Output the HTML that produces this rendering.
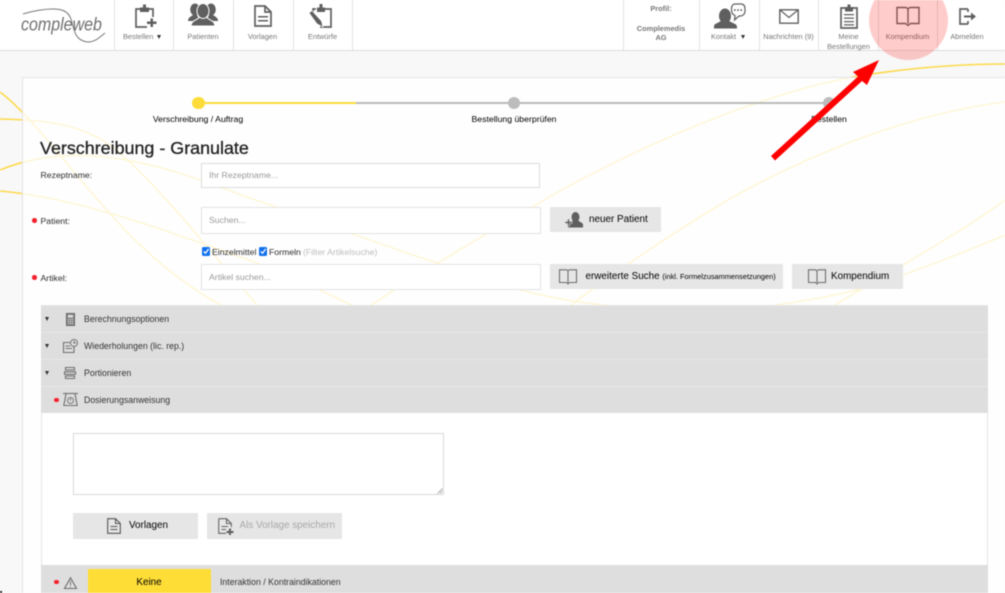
<!DOCTYPE html>
<html lang="de">
<head>
<meta charset="utf-8">
<title>Verschreibung - Granulate</title>
<style>
html,body{margin:0;padding:0;width:1005px;height:593px;overflow:hidden;background:#f8f8f8}
#r{position:relative;width:1005px;height:593px;overflow:hidden;font-family:"Liberation Sans",Arial,sans-serif;background:#f8f8f8;filter:blur(.4px)}
#r *{box-sizing:border-box}
.a{position:absolute}
.t{position:absolute;white-space:nowrap;line-height:12px;height:12px}
.c{transform:translateX(-50%)}
.n{font-size:7.4px;color:#777}
.l{font-size:8.7px;color:#2c2c2c}
.p{font-size:8.7px;color:#999}
.s{font-size:8.7px;color:#000}
.b{font-size:9.9px;color:#000}
.r{font-size:8.75px;color:#333}
.sep{position:absolute;top:0;width:1px;height:50px;background:#e2e2e2}
.inp{position:absolute;background:#fff;border:1px solid #dcdcdc}
.inp2{border:1.5px solid #e3e3e3}
.btn{position:absolute;background:#e6e6e6;border-radius:1px}
.row{position:absolute;left:41px;width:947px;height:27px;background:#dedede;border-top:1px solid #e6e6e6}
.star{position:absolute;width:4.5px;height:4.5px;border-radius:50%;background:#f5222d}
.tri{position:absolute;width:0;height:0;border-left:2.5px solid transparent;border-right:2.5px solid transparent;border-top:4.5px solid #333}
svg{position:absolute;overflow:visible}
.g{fill:#5f5f5f}
.o{fill:none;stroke:#5f5f5f;stroke-width:1.7}
.o2{fill:none;stroke:#6f6f6f;stroke-width:1.1}
</style>
</head>
<body>
<div id="r">
  <!-- background curves -->
  <svg style="left:0;top:0" width="1005" height="593" viewBox="0 0 1005 593" fill="none" stroke="#fdd94a" stroke-width="1.6">
    <path d="M0 92C30 114 70 170 113 217C150 258 185 285 222 306"/>
    <path d="M0 119C40 120 85 122 120 153C170 198 215 258 258 306"/>
    <path d="M0 170C60 145 130 155 200 180C300 216 430 262 520 290C560 300 585 303 612 306"/>
    <path d="M0 191C80 198 170 232 257 263C295 277 325 293 354 306"/>
    <path d="M370 306C420 272 490 232 532 207C620 155 760 90 872 74C920 67 960 64 1005 64"/>
    <path d="M570 306C610 275 680 228 733 197C800 160 900 115 1005 102"/>
    <path d="M833 306C860 290 880 278 903 265C940 243 975 222 1005 200"/>
    <path d="M770 306C810 300 840 295 867 287C920 270 965 252 1005 235"/>
  </svg>

  <!-- card -->
  <div class="a" style="left:22px;top:77px;width:1000px;height:530px;background:rgba(255,255,255,.79);border:1px solid #e3e3e3"></div>

  <!-- header -->
  <div class="a" style="left:0;top:0;width:1005px;height:51px;background:#fff;border-bottom:1px solid #dedede"></div>
  <div class="sep" style="left:114px"></div><div class="sep" style="left:173px"></div><div class="sep" style="left:233px"></div><div class="sep" style="left:293px"></div><div class="sep" style="left:352px"></div>
  <div class="sep" style="left:623px"></div><div class="sep" style="left:699px"></div><div class="sep" style="left:759px"></div><div class="sep" style="left:818px"></div><div class="sep" style="left:878px"></div><div class="sep" style="left:937px"></div>

  <!-- logo -->
  <div class="t" style="left:21px;top:16px;height:20px;line-height:20px;font-size:16px;font-style:italic;color:#707070;transform:scaleY(1.15)">compleweb</div>
  <svg style="left:0;top:0" width="120" height="50" fill="none" stroke="#777" stroke-width="1"><path d="M23 14C33 11 45 9 53 9C62 9 68 11 71 19C74 28 74 41 88 42C95 42 100 37 105 33"/></svg>

  <!-- nav icons -->
  <svg style="left:134px;top:3px" width="26" height="26" viewBox="0 0 26 26"><path class="o" d="M6 6H2V24H13M15 6H19V14"/><path class="g" d="M6 4.500H9V1.500H12V4.500H15V9H6Z"/><path class="g" d="M16.500 15.500h2.500v3h3.500v2.500H19v3h-2.500v-3H13v-2.500h3.500Z"/></svg>
  <svg style="left:188px;top:3px" width="30" height="24" viewBox="0 0 30 24"><ellipse class="g" cx="7" cy="6.500" rx="4.800" ry="6"/><ellipse class="g" cx="23" cy="6.500" rx="4.800" ry="6"/><path class="g" d="M0 18C0 14.500 3 13.500 5 12H9L11 16H19L21 12H25C27 13.500 30 14.500 30 18Z"/><path class="g" d="M8.500 16.500C6 17.500 3 19 3 23H27C27 19 24 17.500 21.500 16.500L18 14H12Z" stroke="#fff" stroke-width="1"/><ellipse class="g" cx="15" cy="8" rx="6" ry="7.500" stroke="#fff" stroke-width="1"/></svg>
  <svg style="left:254px;top:5px" width="18" height="22" viewBox="0 0 18 22"><path class="o" d="M1 1H11L17 7V21H1Z"/><path class="o" d="M11 1V7H17"/><path class="g" d="M4 11H14V12.500H4ZM4 15H14V16.500H4Z"/></svg>
  <svg style="left:308px;top:3px" width="26" height="26" viewBox="0 0 26 26"><path class="o" d="M8 6H5V13M16 6H23V24H12"/><path class="g" d="M9 4.500H11.500V1H14.500V4.500H17V9H9Z"/><path class="g" d="M1 10L4 7.500L13.500 18L15 24L9 21Z" stroke="#fff" stroke-width=".7"/></svg>

  <svg style="left:714px;top:2px" width="32" height="27" viewBox="0 0 32 27"><ellipse class="g" cx="11" cy="14" rx="6" ry="7.500"/><path class="g" d="M7 19L.5 22.500C0 23.500 0 25 0 26.500H23C23 25 23 23.500 22 22.500L15 19Z"/><path fill="#fff" stroke="#5f5f5f" stroke-width="1.200" d="M21 2H27C30 2 31 4 31 7V9C31 12 29 14 26 14H25L20.500 18L21 13.500C18.500 12.500 17.500 10.500 17.500 8V6C17.500 4 19 2 21 2Z"/><path class="g" d="M20 7.300h1.600v1.600H20ZM23.200 7.300h1.600v1.600h-1.600ZM26.400 7.300h1.600v1.600h-1.600Z"/></svg>
  <svg style="left:779px;top:9px" width="20" height="15" viewBox="0 0 20 15"><path class="o" d="M.8.800H19.200V14.200H.8Z" style="stroke-width:1.400"/><path class="o" d="M1 1L10 8.500L19 1" style="stroke-width:1.200"/></svg>
  <svg style="left:840px;top:4px" width="18" height="25" viewBox="0 0 18 25"><path class="o" d="M5 4H1V24H17V4H13"/><path class="g" d="M5 3H7.500V.5H10.500V3H13V7.500H5Z"/><path class="g" d="M4 10H14V11.300H4ZM4 13.500H14V14.800H4ZM4 17H14V18.300H4ZM4 20.300H14V21.500H4Z"/></svg>
  <svg style="left:896px;top:6px" width="24" height="21" viewBox="0 0 24 21"><path fill="none" stroke="#666" stroke-width="1.400" d="M1 1.500H9.500C11 1.500 12 2.500 12 4C12 2.500 13 1.500 14.500 1.500H23V17.500H14.500L12 19.500L9.500 17.500H1ZM12 4V17.500"/></svg>
  <svg style="left:959px;top:8px" width="18" height="17" viewBox="0 0 18 17"><path class="o" d="M9 1H1V16H9M9 1V4M9 13V16"/><path class="g" d="M5 7.500H12V4.500L17 8.500L12 12.500V9.500H5Z"/></svg>

  <!-- nav text -->
  <div class="t n" style="left:123px;top:31px">Bestellen</div><div class="tri" style="left:157px;top:35px;border-top-color:#333"></div>
  <div class="t n c" style="left:203px;top:31px">Patienten</div>
  <div class="t n c" style="left:262.500px;top:31px">Vorlagen</div>
  <div class="t n c" style="left:322.500px;top:31px">Entwürfe</div>
  <div class="t n c" style="left:661px;top:3px;font-weight:bold">Profil:</div>
  <div class="t n c" style="left:661px;top:22.500px;font-weight:bold">Complemedis</div>
  <div class="t n c" style="left:661px;top:32px;font-weight:bold">AG</div>
  <div class="t n" style="left:711px;top:31px">Kontakt</div><div class="tri" style="left:741px;top:35px;border-top-color:#333"></div>
  <div class="t n c" style="left:788.500px;top:31px">Nachrichten (9)</div>
  <div class="t n c" style="left:848.500px;top:31px">Meine</div>
  <div class="t n c" style="left:848.500px;top:40.500px">Bestellungen</div>
  <div class="t n c" style="left:907.500px;top:31px">Kompendium</div>
  <div class="t n c" style="left:967px;top:31px">Abmelden</div>

  <!-- stepper -->
  <div class="a" style="left:198px;top:101.500px;width:158px;height:2.500px;background:#fddc3a"></div>
  <div class="a" style="left:356px;top:101.500px;width:472px;height:2.500px;background:#b9b9b9"></div>
  <div class="a" style="left:192px;top:96.500px;width:12.500px;height:12.500px;border-radius:50%;background:#fddc3a"></div>
  <div class="a" style="left:507.500px;top:96.500px;width:12.500px;height:12.500px;border-radius:50%;background:#bcbcbc"></div>
  <div class="a" style="left:822.500px;top:96.500px;width:12.500px;height:12.500px;border-radius:50%;background:#bcbcbc"></div>
  <div class="t s c" style="left:198px;top:113px">Verschreibung / Auftrag</div>
  <div class="t s c" style="left:514px;top:113px">Bestellung überprüfen</div>
  <div class="t s c" style="left:829px;top:113px">Bestellen</div>

  <!-- title -->
  <div class="t" style="left:40px;top:137px;height:22px;line-height:22px;font-size:17.900px;color:#222;-webkit-text-stroke:.3px #222">Verschreibung - Granulate</div>

  <!-- form -->
  <div class="t l" style="left:40.500px;top:169px">Rezeptname:</div>
  <div class="inp" style="left:201px;top:163px;width:339px;height:25px"></div>
  <div class="t p" style="left:209px;top:169px">Ihr Rezeptname...</div>

  <div class="star" style="left:32px;top:218px"></div>
  <div class="t l" style="left:40.500px;top:215px">Patient:</div>
  <div class="inp inp2" style="left:201px;top:207px;width:340px;height:27px"></div>
  <div class="t p" style="left:209px;top:214px">Suchen...</div>
  <div class="btn" style="left:550px;top:207px;width:111px;height:25px"></div>
  <svg style="left:565px;top:212px" width="18" height="16" viewBox="0 0 18 16"><ellipse class="g" cx="10.500" cy="5" rx="4" ry="5"/><path class="g" d="M8 8.500L3 11V15.500H18V12.500C18 11 15 10 13 8.500Z"/><path d="M0 9.500h2.500V7h2v2.500H7v2H4.500V14h-2v-2.500H0Z" fill="#5f5f5f" stroke="#e6e6e6" stroke-width=".6"/></svg>
  <div class="t b" style="left:589px;top:213.500px">neuer Patient</div>

  <div class="a" style="left:201.500px;top:247px;width:8.500px;height:8.500px;background:#1170ee;border-radius:1.500px"></div>
  <svg style="left:201.500px;top:247px" width="8" height="8" fill="none" stroke="#fff" stroke-width="1.300"><path d="M1.800 4.400L3.500 6.200L6.600 2"/></svg>
  <div class="t l" style="left:212px;top:246px">Einzelmittel</div>
  <div class="a" style="left:258.500px;top:247px;width:8.500px;height:8.500px;background:#1170ee;border-radius:1.500px"></div>
  <svg style="left:258.500px;top:247px" width="8" height="8" fill="none" stroke="#fff" stroke-width="1.300"><path d="M1.800 4.400L3.500 6.200L6.600 2"/></svg>
  <div class="t l" style="left:269px;top:246px">Formeln</div>
  <div class="t" style="left:303px;top:246px;font-size:8.700px;color:#bdbdbd">(Filter Artikelsuche)</div>

  <div class="star" style="left:32px;top:275px"></div>
  <div class="t l" style="left:40.500px;top:272px">Artikel:</div>
  <div class="inp inp2" style="left:201px;top:264px;width:340px;height:26px"></div>
  <div class="t p" style="left:209px;top:271px">Artikel suchen...</div>
  <div class="btn" style="left:550px;top:264px;width:233px;height:25px"></div>
  <svg style="left:559px;top:269px" width="18" height="16" viewBox="0 0 18 16"><path class="o2" d="M.5.800H7C8 .8 9 1.500 9 2.500C9 1.500 10 .8 11 .8H17.500V13.500H10.500L9 15L7.500 13.500H.5ZM9 2.500V13.500"/></svg>
  <div class="t b" style="left:585.500px;top:270.500px">erweiterte Suche <span style="font-size:7.400px">(inkl. Formelzusammensetzungen)</span></div>
  <div class="btn" style="left:791.500px;top:264px;width:111px;height:25px"></div>
  <svg style="left:808px;top:269px" width="18" height="16" viewBox="0 0 18 16"><path class="o2" d="M.5.800H7C8 .8 9 1.500 9 2.500C9 1.500 10 .8 11 .8H17.500V13.500H10.500L9 15L7.500 13.500H.5ZM9 2.500V13.500"/></svg>
  <div class="t b" style="left:831px;top:270.500px">Kompendium</div>

  <!-- panel -->
  <div class="a" style="left:41px;top:305px;width:947px;height:288px;background:#fff;border-left:1.500px solid #e6e6e6;border-right:1px solid #e6e6e6"></div>
  <div class="row" style="top:305px"></div>
  <div class="row" style="top:332px"></div>
  <div class="row" style="top:359px"></div>
  <div class="row" style="top:386px"></div>
  <div class="tri" style="left:45px;top:316.500px"></div>
  <div class="tri" style="left:45px;top:343.500px"></div>
  <div class="tri" style="left:45px;top:370.500px"></div>
  <div class="star" style="left:54px;top:397.500px"></div>

  <svg style="left:66px;top:313px" width="9" height="13" viewBox="0 0 9 13"><rect x=".5" y=".5" width="8" height="12" fill="#888" stroke="#666"/><rect x="2" y="2" width="5" height="2.500" fill="#ddd"/><path d="M2 6h1v1H2ZM4 6h1v1H4ZM6 6h1v1H6ZM2 8h1v1H2ZM4 8h1v1H4ZM6 8h1v1H6ZM2 10h1v1H2ZM4 10h1v1H4ZM6 10h1v1H6Z" fill="#ddd"/></svg>
  <svg style="left:63px;top:339px" width="15" height="14" viewBox="0 0 15 14"><path class="o2" d="M8 3.500H.5V13.500H11V8"/><path class="o2" d="M2.500 7H7M2.500 9.500H9"/><circle cx="11" cy="4" r="3.500" fill="#dedede" stroke="#777"/><path class="o2" d="M11 2V4H13"/></svg>
  <svg style="left:64px;top:367px" width="12" height="12" viewBox="0 0 12 12"><path class="o2" d="M1.500.5H10.500V3H1.500ZM.5 4.800H11.500V7.300H.5ZM1.500 9H10.500V11.500H1.500Z"/></svg>
  <svg style="left:63px;top:393px" width="15" height="13" viewBox="0 0 15 13"><path d="M0 .5H15" stroke="#777" stroke-width="1.200"/><path class="o2" d="M3 1L.8 12.500H14.200L12 1"/><circle cx="7.500" cy="7.500" r="3" fill="none" stroke="#777"/><path class="o2" d="M7.500 5.500V7.500"/></svg>

  <div class="t r" style="left:84px;top:312.500px">Berechnungsoptionen</div>
  <div class="t r" style="left:84px;top:339.500px">Wiederholungen (lic. rep.)</div>
  <div class="t r" style="left:84px;top:366.500px">Portionieren</div>
  <div class="t r" style="left:84px;top:393.500px">Dosierungsanweisung</div>

  <!-- textarea -->
  <div class="inp" style="left:73px;top:433px;width:371px;height:62px;border-color:#d9d9d9"></div>
  <svg style="left:437px;top:488px" width="6" height="6" stroke="#888" stroke-width=".7"><path d="M5.500 .5L.5 5.500M5.500 3L3 5.500"/></svg>

  <!-- buttons -->
  <div class="btn" style="left:73px;top:513px;width:125px;height:26px"></div>
  <svg style="left:107px;top:518px" width="14" height="16" viewBox="0 0 14 16"><path class="o2" d="M.7.700H8.500L13.300 5.500V15.300H.7Z" style="stroke:#555;stroke-width:1.100"/><path class="o2" d="M8.500.7V5.500H13.300M3.500 8.500H10.500M3.500 11.500H10.500" style="stroke:#555"/></svg>
  <div class="t b" style="left:129px;top:519.500px">Vorlagen</div>
  <div class="btn" style="left:207px;top:513px;width:135px;height:26px"></div>
  <svg style="left:218px;top:518px" width="16" height="17" viewBox="0 0 16 17"><path class="o2" d="M.7.700H8.500L13.300 5.500V9M8 15.300H.7V.7" style="stroke:#666;stroke-width:1.100"/><path class="o2" d="M8.500.7V5.500H13.300M3.500 8.500H10M3.500 11.500H8" style="stroke:#666"/><path class="g" d="M11 10.500h2v2.500h2.500v2H13v2h-2v-2H8.500v-2H11Z"/></svg>
  <div class="t b" style="left:239.500px;top:519.500px;color:#a8a8a8">Als Vorlage speichern</div>

  <!-- bottom row -->
  <div class="a" style="left:41px;top:565px;width:947px;height:28px;background:#dedede"></div>
  <div class="star" style="left:54px;top:579.500px"></div>
  <svg style="left:64px;top:577px" width="13" height="12" viewBox="0 0 13 12"><path class="o2" d="M6.500 .8L12.500 11.500H.5Z"/><path d="M6.500 4V8.500M6.500 9.500V10.500" stroke="#777" stroke-width="1" fill="none"/></svg>
  <div class="a" style="left:87.500px;top:569px;width:123.500px;height:24px;background:#fedd37"></div>
  <div class="t c" style="left:149px;top:576.500px;font-size:9.900px;color:#000">Keine</div>
  <div class="t r" style="left:220px;top:576px">Interaktion / Kontraindikationen</div>

  <!-- corner -->
  <div class="a" style="left:0;top:591px;width:2px;height:2px;background:#222"></div>

  <!-- highlight -->
  <div class="a" style="left:868.500px;top:-19.500px;width:79.500px;height:79.500px;border-radius:50%;background:rgba(255,0,0,.2)"></div>
  <svg style="left:0;top:0" width="1005" height="593" viewBox="0 0 1005 593"><path fill="#ff0000" d="M771 156L858 76.500L853 72L879 60L867 85L862 81L775 160.500Z"/></svg>
</div>
</body>
</html>
